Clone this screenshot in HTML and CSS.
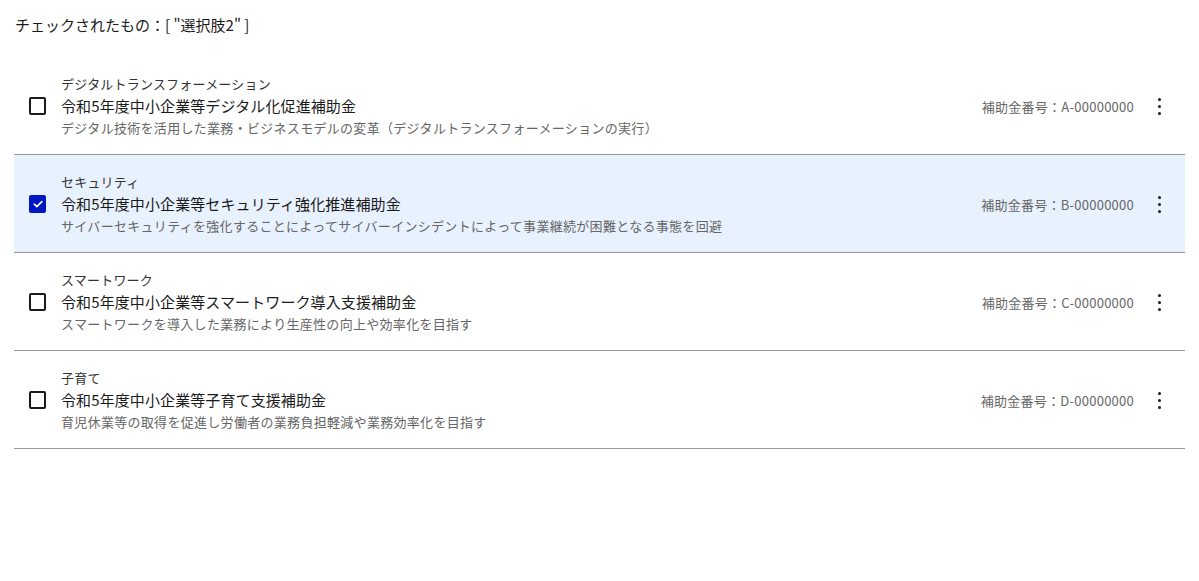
FILE: index.html
```html
<!DOCTYPE html>
<html lang="ja">
<head>
<meta charset="utf-8">
<link rel="stylesheet" href="styles.css">
</head>
<body>
<div class="page">
  <p class="result">チェックされたもの：[ "選択肢2" ]</p>
  <ul class="list">
    <li class="item">
      <span class="checkbox"></span>
      <div class="texts">
        <div class="overline">デジタルトランスフォーメーション</div>
        <div class="primary">令和5年度中小企業等デジタル化促進補助金</div>
        <div class="secondary">デジタル技術を活用した業務・ビジネスモデルの変革（デジタルトランスフォーメーションの実行）</div>
      </div>
      <span class="meta">補助金番号：A-00000000</span>
      <span class="kebab"><i></i><i></i><i></i></span>
    </li>
    <li class="item selected">
      <span class="checkbox checked"><svg viewBox="0 0 12 12" width="12" height="12"><path d="M2.3 6.2 L4.9 8.6 L9.8 3.6" fill="none" stroke="#fff" stroke-width="1.6" stroke-linecap="round" stroke-linejoin="round"/></svg></span>
      <div class="texts">
        <div class="overline">セキュリティ</div>
        <div class="primary">令和5年度中小企業等セキュリティ強化推進補助金</div>
        <div class="secondary">サイバーセキュリティを強化することによってサイバーインシデントによって事業継続が困難となる事態を回避</div>
      </div>
      <span class="meta">補助金番号：B-00000000</span>
      <span class="kebab"><i></i><i></i><i></i></span>
    </li>
    <li class="item">
      <span class="checkbox"></span>
      <div class="texts">
        <div class="overline">スマートワーク</div>
        <div class="primary">令和5年度中小企業等スマートワーク導入支援補助金</div>
        <div class="secondary">スマートワークを導入した業務により生産性の向上や効率化を目指す</div>
      </div>
      <span class="meta">補助金番号：C-00000000</span>
      <span class="kebab"><i></i><i></i><i></i></span>
    </li>
    <li class="item">
      <span class="checkbox"></span>
      <div class="texts">
        <div class="overline">子育て</div>
        <div class="primary">令和5年度中小企業等子育て支援補助金</div>
        <div class="secondary">育児休業等の取得を促進し労働者の業務負担軽減や業務効率化を目指す</div>
      </div>
      <span class="meta">補助金番号：D-00000000</span>
      <span class="kebab"><i></i><i></i><i></i></span>
    </li>
  </ul>
</div>
</body>
</html>
```
FILE: styles.css
```css
* { box-sizing: border-box; }
html, body { margin: 0; padding: 0; background: #fff; }
body {
  font-family: "Noto Sans CJK JP", "Noto Sans", sans-serif;
  color: #1a1a1a;
}
.page { padding: 13px 14px 0 14px; }
.result {
  margin: 0 0 20px 1px;
  font-size: 15px;
  line-height: 24px;
  color: #1a1a1a;
}
.list { list-style: none; margin: 0; padding: 0; }
.item {
  display: flex;
  align-items: center;
  padding: 17px 14px 16px 15px;
  border-bottom: 1px solid #999;
}
.item.selected { background: #e8f1fe; }
.checkbox {
  flex: none;
  width: 17px;
  height: 18px;
  border: 2px solid #1a1a1a;
  border-radius: 2px;
  display: flex;
  align-items: center;
  justify-content: center;
  margin-right: 15px;
  background: #fff;
}
.checkbox.checked {
  background: #0017c1;
  border-color: #0017c1;
}
.texts { flex: 1; min-width: 0; }
.overline { font-size: 13px; line-height: 20px; color: #333; letter-spacing: 0.2px; }
.primary { font-size: 15px; line-height: 24px; color: #1a1a1a; letter-spacing: 0.1px; }
.secondary { font-size: 13px; line-height: 20px; color: #666; letter-spacing: 0.3px; }
.meta {
  flex: none;
  font-size: 13px;
  color: #666;
  margin-right: 13px;
  letter-spacing: 0.25px;
}
.kebab {
  flex: none;
  width: 24px;
  height: 24px;
  display: flex;
  flex-direction: column;
  align-items: center;
  justify-content: center;
  gap: 4px;
}
.kebab i {
  display: block;
  width: 3px;
  height: 3px;
  border-radius: 50%;
  background: #1a1a1a;
}
```
